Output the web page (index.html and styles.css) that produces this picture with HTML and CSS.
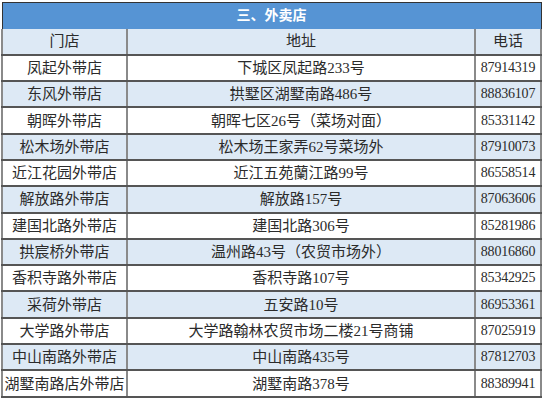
FILE: index.html
```html
<!DOCTYPE html>
<html lang="zh">
<head>
<meta charset="utf-8">
<title>三、外卖店</title>
<link rel="stylesheet" href="styles.css">
</head>
<body>
<div class="wrap">
<table class="shops">
<colgroup><col class="c1"><col class="c2"><col class="c3"></colgroup>
<thead>
<tr class="title"><th colspan="3">三、外卖店</th></tr>
<tr class="head alt"><th>门店</th><th>地址</th><th>电话</th></tr>
</thead>
<tbody>
<tr><td>凤起外带店</td><td>下城区凤起路233号</td><td class="tel">87914319</td></tr>
<tr class="alt"><td>东风外带店</td><td>拱墅区湖墅南路486号</td><td class="tel">88836107</td></tr>
<tr><td>朝晖外带店</td><td>朝晖七区26号（菜场对面）</td><td class="tel">85331142</td></tr>
<tr class="alt"><td>松木场外带店</td><td>松木场王家弄62号菜场外</td><td class="tel">87910073</td></tr>
<tr><td>近江花园外带店</td><td>近江五苑蘭江路99号</td><td class="tel">86558514</td></tr>
<tr class="alt"><td>解放路外带店</td><td>解放路157号</td><td class="tel">87063606</td></tr>
<tr><td>建国北路外带店</td><td>建国北路306号</td><td class="tel">85281986</td></tr>
<tr class="alt"><td>拱宸桥外带店</td><td>温州路43号（农贸市场外）</td><td class="tel">88016860</td></tr>
<tr><td>香积寺路外带店</td><td>香积寺路107号</td><td class="tel">85342925</td></tr>
<tr class="alt"><td>采荷外带店</td><td>五安路10号</td><td class="tel">86953361</td></tr>
<tr><td>大学路外带店</td><td>大学路翰林农贸市场二楼21号商铺</td><td class="tel">87025919</td></tr>
<tr class="alt"><td>中山南路外带店</td><td>中山南路435号</td><td class="tel">87812703</td></tr>
<tr><td>湖墅南路店外带店</td><td>湖墅南路378号</td><td class="tel">88389941</td></tr>
</tbody>
</table>
</div>
</body>
</html>
```
FILE: styles.css
```css
html, body {
  margin: 0;
  padding: 0;
  background: #ffffff;
}
.wrap {
  padding: 2px 0 0 1px;
}
.shops {
  border-collapse: collapse;
  table-layout: fixed;
  width: 539px;
  font-family: "Liberation Serif", "Noto Sans CJK SC", serif;
  font-size: 15px;
  color: #2b2b2b;
  border: 1px solid #333333;
}
.c1 { width: 125px; }
.c2 { width: 348px; }
.c3 { width: 66px; }
.shops th, .shops td {
  padding: 0;
  text-align: center;
  font-weight: normal;
  line-height: 18px;
  border-left: 2px solid #8a8a8a;
  border-right: 2px solid #8a8a8a;
  border-top: 2px solid #555555;
  border-bottom: 2px solid #555555;
  white-space: nowrap;
  overflow: hidden;
}
.shops tr { height: 26.3px; }
.shops .title { height: 26px; }
.shops .title th {
  background: #5694d4;
  color: #ffffff;
  font-weight: bold;
  font-size: 14px;
  border: 1px solid #333333;
  border-bottom: none;
}
.shops .head th { border-top: none; }
.shops tr.alt td, .shops tr.alt th { background: #dde9f5; }
.shops .tel {
  font-size: 14px;
  letter-spacing: -0.2px;
}
```
